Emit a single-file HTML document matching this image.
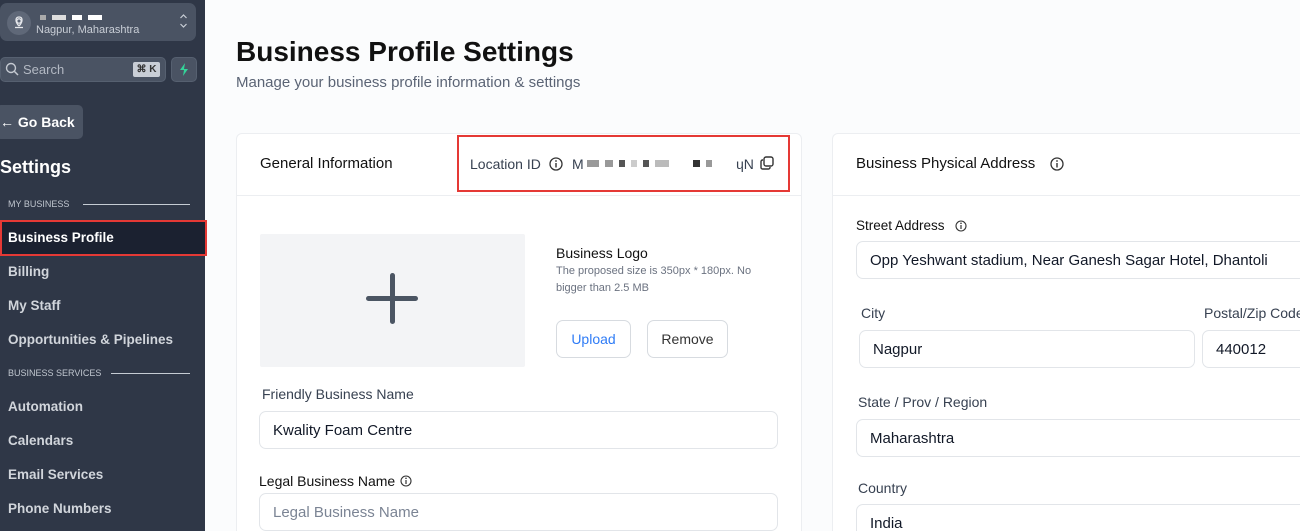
<!DOCTYPE html>
<html><head><meta charset="utf-8"><style>
*{box-sizing:border-box;margin:0;padding:0}
html,body{width:1300px;height:531px;overflow:hidden}
body{background:#fbfcfd;font-family:"Liberation Sans",sans-serif;position:relative;color:#111827}
.a{position:absolute;white-space:nowrap}
.sb{left:0;top:0;width:205px;height:531px;background:#2f3747}
.nav{position:absolute;left:8px;font-size:13.5px;color:#d1d5db;font-weight:bold}
.sec{position:absolute;left:8px;font-size:9px;color:#c0c6cf}
.line{position:absolute;height:1px;background:#c5cbd3}
.card{position:absolute;background:#fff;border:1px solid #eceef1;border-radius:6px}
.lbl{position:absolute;font-size:14px;color:#374151;white-space:nowrap}
.inp{position:absolute;border:1px solid #e2e5e9;border-radius:7px;background:#fff;font-size:15px;color:#111827;padding-left:13px;display:flex;align-items:center;white-space:nowrap;overflow:hidden}
.blk{display:inline-block;height:7px;margin-right:6px;background:#777;vertical-align:middle}
svg.i{vertical-align:-2px}
</style></head><body>
<div class="a sb"></div>
<div class="a" style="left:0;top:3px;width:196px;height:38px;background:#4a5363;border-radius:7px"></div>
<div class="a" style="left:7px;top:11px;width:24px;height:24px;border-radius:50%;background:#5f6878"></div>
<svg class="a" style="left:12px;top:15px" width="14" height="16" viewBox="0 0 14 16"><circle cx="7" cy="6" r="2.2" fill="none" stroke="#e5e7eb" stroke-width="1.3"/><path d="M3 12.5 L11 12.5 M7 11 C3 7 3 2 7 2 C11 2 11 7 7 11" fill="none" stroke="#e5e7eb" stroke-width="1.3"/></svg>
<div class="a" style="left:40px;top:14px;width:100px;height:6px;line-height:6px;font-size:0"><span class="blk" style="width:6px;height:5px;background:#aaa"></span><span class="blk" style="width:14px;height:5px;background:#ddd"></span><span class="blk" style="width:10px;height:5px;background:#fff"></span><span class="blk" style="width:14px;height:5px;background:#fff"></span></div>
<div class="a" style="left:36px;top:24px;font-size:11px;color:#c9ced6">Nagpur, Maharashtra</div>
<svg class="a" style="left:179px;top:13px" width="9" height="16"><path d="M1.5 5 L4.5 2 L7.5 5 M1.5 11 L4.5 14 L7.5 11" fill="none" stroke="#c9ced6" stroke-width="1.2"/></svg>
<div class="a" style="left:0;top:57px;width:166px;height:25px;background:#4a5363;border-radius:5px;border:1px solid #566070"></div>
<svg class="a" style="left:5px;top:62px" width="14" height="14"><circle cx="6" cy="6" r="4.5" fill="none" stroke="#c4c9d1" stroke-width="1.4"/><path d="M9.5 9.5 L13 13" stroke="#c4c9d1" stroke-width="1.5"/></svg>
<div class="a" style="left:23px;top:62px;font-size:13px;color:#b3b9c3">Search</div>
<div class="a" style="left:133px;top:62px;width:27px;height:15px;background:#c9ced6;border-radius:2px;font-size:10px;color:#333;text-align:center;line-height:15px;font-weight:bold">⌘ K</div>
<div class="a" style="left:171px;top:57px;width:26px;height:25px;background:#4a5363;border-radius:5px;border:1px solid #566070"></div>
<svg class="a" style="left:178px;top:63px" width="12" height="13"><path d="M7 0 L2 7 L6 7 L5 13 L10 6 L6 6 Z" fill="#34d399"/></svg>
<div class="a" style="left:-4px;top:105px;width:87px;height:34px;background:#4a5363;border-radius:5px;color:#fff;font-size:14px;font-weight:bold;line-height:34px;padding-left:4px">← Go Back</div>
<div class="a" style="left:0;top:157px;font-size:18px;font-weight:bold;color:#fff">Settings</div>
<div class="sec" style="top:199px">MY BUSINESS</div><div class="line" style="left:83px;top:204px;width:107px"></div>
<div class="a" style="left:0;top:220px;width:207px;height:36px;background:#1b2130;border:2px solid #e53935"></div>
<div class="nav" style="top:230px;color:#fff">Business Profile</div>
<div class="nav" style="top:264px">Billing</div>
<div class="nav" style="top:298px">My Staff</div>
<div class="nav" style="top:332px">Opportunities &amp; Pipelines</div>
<div class="sec" style="top:368px">BUSINESS SERVICES</div><div class="line" style="left:111px;top:373px;width:79px"></div>
<div class="nav" style="top:399px">Automation</div>
<div class="nav" style="top:433px">Calendars</div>
<div class="nav" style="top:467px">Email Services</div>
<div class="nav" style="top:501px">Phone Numbers</div>

<div class="a" style="left:236px;top:36px;font-size:28px;font-weight:bold;color:#111">Business Profile Settings</div>
<div class="a" style="left:236px;top:74px;font-size:15px;color:#5b6475">Manage your business profile information &amp; settings</div>

<div class="card" style="left:236px;top:133px;width:566px;height:420px"></div>
<div class="a" style="left:237px;top:195px;width:564px;height:1px;background:#eceef1"></div>
<div class="a" style="left:260px;top:155px;font-size:15px;color:#111">General Information</div>
<div class="a" style="left:457px;top:135px;width:333px;height:57px;border:2px solid #e53935"></div>
<div class="a" style="left:470px;top:156px;font-size:14px;color:#374151">Location ID</div>
<svg class="a" style="left:549px;top:157px" width="14" height="14"><circle cx="7" cy="7" r="6" fill="none" stroke="#333" stroke-width="1.3"/><path d="M7 6 V10.5" stroke="#333" stroke-width="1.4"/><circle cx="7" cy="4" r="0.9" fill="#333"/></svg>
<div class="a" style="left:572px;top:156px;font-size:14px;color:#374151">M</div>
<div class="a" style="left:587px;top:160px;font-size:0"><span class="blk" style="width:12px;background:#999"></span><span class="blk" style="width:8px;background:#999"></span><span class="blk" style="width:6px;background:#555"></span><span class="blk" style="width:6px;background:#ccc"></span><span class="blk" style="width:6px;background:#555"></span><span class="blk" style="width:14px;background:#bbb"></span><span class="blk" style="width:0;margin-right:18px"></span><span class="blk" style="width:7px;background:#333"></span><span class="blk" style="width:6px;background:#999"></span></div>
<div class="a" style="left:736px;top:156px;font-size:14px;color:#374151">ɥN</div>
<svg class="a" style="left:760px;top:156px" width="14" height="14"><rect x="4" y="1" width="9" height="9" rx="2" fill="none" stroke="#333" stroke-width="1.4"/><path d="M3 4 H2.5 A1.5 1.5 0 0 0 1 5.5 V11.5 A1.5 1.5 0 0 0 2.5 13 H8.5 A1.5 1.5 0 0 0 10 11.5 V11" fill="none" stroke="#333" stroke-width="1.4"/></svg>

<div class="a" style="left:260px;top:234px;width:265px;height:133px;background:#f3f4f6;border-radius:2px"></div>
<div class="a" style="left:390px;top:273px;width:5px;height:51px;background:#4b5563;border-radius:3px"></div>
<div class="a" style="left:366px;top:296px;width:52px;height:5px;background:#4b5563;border-radius:3px"></div>
<div class="a" style="left:556px;top:245px;font-size:14px;color:#111">Business Logo</div>
<div class="a" style="left:556px;top:263px;font-size:11px;color:#6b7280;line-height:17px;width:225px;white-space:normal">The proposed size is 350px * 180px. No bigger than 2.5 MB</div>
<div class="a" style="left:556px;top:320px;width:75px;height:38px;border:1px solid #d7dbe0;border-radius:7px;color:#2f7cf6;font-size:14px;text-align:center;line-height:36px">Upload</div>
<div class="a" style="left:647px;top:320px;width:81px;height:38px;border:1px solid #d7dbe0;border-radius:7px;color:#333;font-size:14px;text-align:center;line-height:36px">Remove</div>
<div class="lbl" style="left:262px;top:386px">Friendly Business Name</div>
<div class="inp" style="left:259px;top:411px;width:519px;height:38px">Kwality Foam Centre</div>
<div class="lbl" style="left:259px;top:473px;color:#111">Legal Business Name</div>
<svg class="a" style="left:400px;top:475px" width="12" height="12"><circle cx="6" cy="6" r="5" fill="none" stroke="#333" stroke-width="1.1"/><path d="M6 5 V9" stroke="#333" stroke-width="1.2"/><circle cx="6" cy="3.3" r="0.8" fill="#333"/></svg>
<div class="inp" style="left:259px;top:493px;width:519px;height:38px;color:#7b8494">Legal Business Name</div>

<div class="card" style="left:832px;top:133px;width:500px;height:420px"></div>
<div class="a" style="left:833px;top:195px;width:467px;height:1px;background:#eceef1"></div>
<div class="a" style="left:856px;top:155px;font-size:15px;color:#111">Business Physical Address</div>
<svg class="a" style="left:1050px;top:157px" width="14" height="14"><circle cx="7" cy="7" r="6" fill="none" stroke="#333" stroke-width="1.3"/><path d="M7 6 V10.5" stroke="#333" stroke-width="1.4"/><circle cx="7" cy="4" r="0.9" fill="#333"/></svg>
<div class="lbl" style="left:856px;top:218px;color:#111;font-size:13.5px">Street Address</div>
<svg class="a" style="left:955px;top:220px" width="12" height="12"><circle cx="6" cy="6" r="5" fill="none" stroke="#333" stroke-width="1.1"/><path d="M6 5 V9" stroke="#333" stroke-width="1.2"/><circle cx="6" cy="3.3" r="0.8" fill="#333"/></svg>
<div class="inp" style="left:856px;top:241px;width:460px;height:38px">Opp Yeshwant stadium, Near Ganesh Sagar Hotel, Dhantoli</div>
<div class="lbl" style="left:861px;top:305px">City</div>
<div class="lbl" style="left:1204px;top:305px">Postal/Zip Code</div>
<div class="inp" style="left:859px;top:330px;width:336px;height:38px">Nagpur</div>
<div class="inp" style="left:1202px;top:330px;width:110px;height:38px">440012</div>
<div class="lbl" style="left:858px;top:394px">State / Prov / Region</div>
<div class="inp" style="left:856px;top:419px;width:460px;height:38px">Maharashtra</div>
<div class="lbl" style="left:858px;top:480px">Country</div>
<div class="inp" style="left:856px;top:504px;width:460px;height:38px;align-items:flex-start;padding-top:10px">India</div>
</body></html>
